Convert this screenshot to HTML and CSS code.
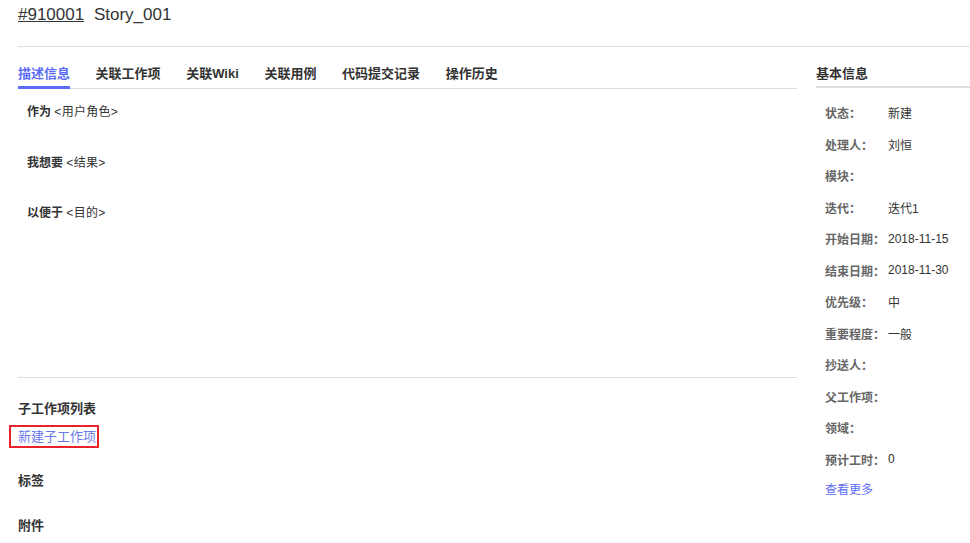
FILE: index.html
```html
<!DOCTYPE html>
<html lang="zh-CN">
<head>
  <meta charset="UTF-8" />
  <title>Story_001</title>
  <link rel="stylesheet" href="styles.css">
</head>
<body>
  <div class="page">
    <div class="title-bar">
      <a class="item-id" href="#">#910001</a>
      <span class="item-name">Story_001</span>
    </div>

    <div class="main">
      <div class="left">
        <ul class="tabs">
          <li class="active">描述信息</li>
          <li>关联工作项</li>
          <li>关联Wiki</li>
          <li>关联用例</li>
          <li>代码提交记录</li>
          <li>操作历史</li>
        </ul>

        <div class="desc">
          <p><b>作为</b> <span class="ph">&lt;用户角色&gt;</span></p>
          <p><b>我想要</b> <span class="ph">&lt;结果&gt;</span></p>
          <p><b>以便于</b> <span class="ph">&lt;目的&gt;</span></p>
        </div>

        <div class="section">
          <h4>子工作项列表</h4>
          <a class="new-child" href="#">新建子工作项</a>
          <h4 class="tags">标签</h4>
          <h4 class="files">附件</h4>
        </div>
      </div>

      <div class="right">
        <h3>基本信息</h3>
        <table class="info">
          <tr><td>状态：</td><td>新建</td></tr>
          <tr><td>处理人：</td><td>刘恒</td></tr>
          <tr><td>模块：</td><td></td></tr>
          <tr><td>迭代：</td><td>迭代1</td></tr>
          <tr><td>开始日期：</td><td>2018-11-15</td></tr>
          <tr><td>结束日期：</td><td>2018-11-30</td></tr>
          <tr><td>优先级：</td><td>中</td></tr>
          <tr><td>重要程度：</td><td>一般</td></tr>
          <tr><td>抄送人：</td><td></td></tr>
          <tr><td>父工作项：</td><td></td></tr>
          <tr><td>领域：</td><td></td></tr>
          <tr><td>预计工时：</td><td>0</td></tr>
        </table>
        <a class="more" href="#">查看更多</a>
      </div>
    </div>
  </div>
</body>
</html>
```

FILE: styles.css
```css
body {
  margin: 0;
  font-family: "Liberation Sans", "Noto Sans CJK SC", sans-serif;
  font-size: 12px;
  color: #333;
  background: #fff;
}
.page {
  padding-left: 18px;
}
.title-bar {
  height: 46px;
  border-bottom: 1px solid #ddd;
  line-height: 30px;
  font-size: 17px;
}
.item-id {
  color: #333;
  text-decoration: underline;
}
.item-name {
  margin-left: 5px;
}
.main {
  display: flex;
  gap: 19px;
}
.left {
  width: 779px;
}
.tabs {
  list-style: none;
  margin: 0;
  padding: 0;
  margin-top: 15px;
  display: flex;
  gap: 25.6px;
  border-bottom: 1px solid #ddd;
}
.tabs li {
  font-size: 13px;
  font-weight: bold;
  line-height: 24px;
  border-bottom: 3px solid transparent;
  margin-bottom: -1px;
}
.tabs li.active {
  color: #5a6cf6;
  border-bottom-color: #5a6cf6;
}
.desc {
  padding: 14px 9px 0;
  height: 274px;
  border-bottom: 1px solid #ddd;
}
.desc p {
  margin: 0 0 32.5px;
  height: 18px;
  line-height: 18px;
  font-size: 12px;
}
.ph {
  font-size: 12px;
  line-height: 1;
  letter-spacing: 0.3px;
}
.section {
  padding-top: 22px;
}
.section h4 {
  margin: 0;
  font-size: 13px;
  line-height: 18px;
}
.section h4.tags {
  margin-top: 24px;
}
.section h4.files {
  margin-top: 27px;
}
.new-child {
  display: inline-block;
  margin-top: 7px;
  margin-left: -9px;
  padding: 1px 1px 1px 7px;
  border: 2px solid #e8232a;
  color: #6a78e8;
  text-decoration: none;
  font-size: 13px;
  line-height: 17px;
}
.right {
  flex: 1;
}
.right h3 {
  margin: 15px 0 0;
  font-size: 13px;
  line-height: 24px;
  border-bottom: 2px solid #ddd;
}
.info {
  border-collapse: collapse;
  margin: 9px 0 0 9px;
}
.info td {
  height: 31.5px;
  padding: 0;
  vertical-align: middle;
  font-size: 12px;
}
.info td:first-child {
  color: #666;
  font-weight: bold;
  width: 63px;
}
.more {
  display: block;
  margin-left: 9px;
  margin-top: 5px;
  color: #5a6cf6;
  text-decoration: none;
}
```
